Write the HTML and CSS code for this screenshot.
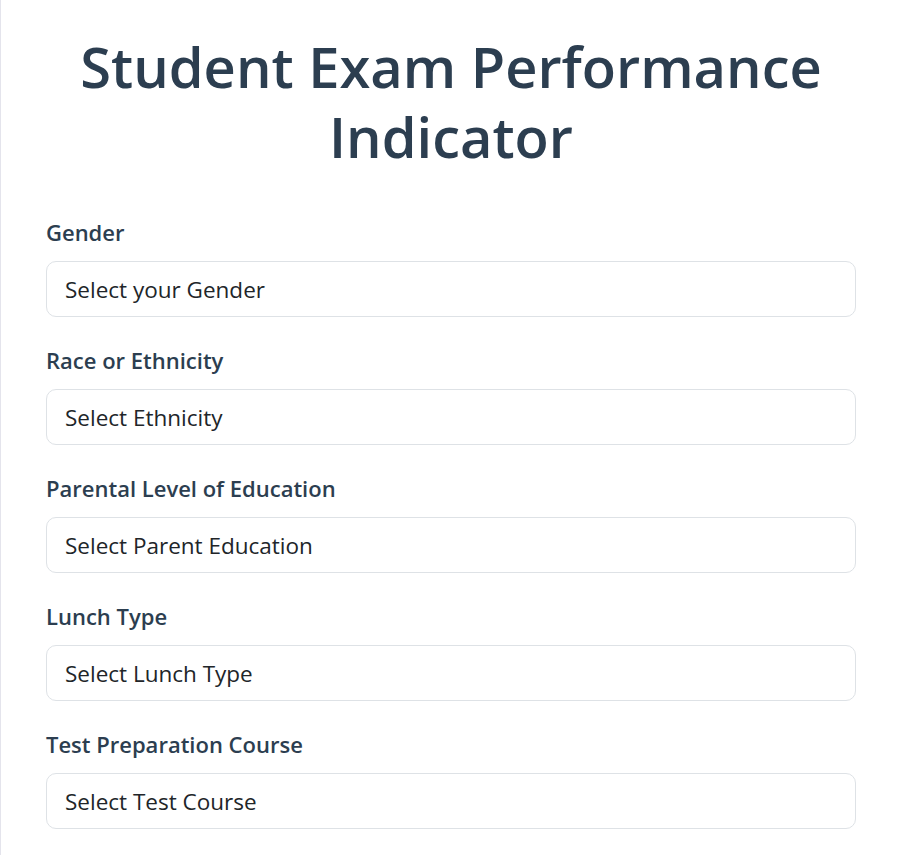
FILE: index.html
```html
<!DOCTYPE html>
<html lang="en">
<head>
<meta charset="utf-8">
<title>Student Exam Performance Indicator</title>
<link rel="stylesheet" href="styles.css">
</head>
<body>
<div class="page">
  <h1 class="title">Student Exam Performance Indicator</h1>
  <form class="form">
    <div class="field">
      <label class="label">Gender</label>
      <div class="select">Select your Gender</div>
    </div>
    <div class="field">
      <label class="label">Race or Ethnicity</label>
      <div class="select">Select Ethnicity</div>
    </div>
    <div class="field">
      <label class="label">Parental Level of Education</label>
      <div class="select">Select Parent Education</div>
    </div>
    <div class="field">
      <label class="label">Lunch Type</label>
      <div class="select">Select Lunch Type</div>
    </div>
    <div class="field">
      <label class="label">Test Preparation Course</label>
      <div class="select">Select Test Course</div>
    </div>
  </form>
</div>
</body>
</html>
```
FILE: styles.css
```css
html, body {
  margin: 0;
  padding: 0;
  background: #ffffff;
}
body {
  font-family: "Open Sans", "Noto Sans", sans-serif;
  border-left: 1px solid #e4e4ec;
  min-height: 100vh;
  box-sizing: border-box;
}
.page {
  padding: 0 45px 0 45px;
}
.title {
  margin: 31px 0 0;
  text-align: center;
  color: #2c3e50;
  font-size: 56px;
  line-height: 70px;
  font-weight: 600;
}
.form {
  display: flex;
  flex-direction: column;
  gap: 28px;
  margin-top: 46px;
}
.field {
  display: flex;
  flex-direction: column;
  gap: 14px;
}
.label {
  color: #2c3e50;
  font-size: 22px;
  line-height: 30px;
  font-weight: 600;
}
.select {
  box-sizing: border-box;
  height: 56px;
  border: 1px solid #dee2e6;
  border-radius: 10px;
  padding: 0 18px;
  display: flex;
  align-items: center;
  font-size: 22.5px;
  color: #212529;
}
```
